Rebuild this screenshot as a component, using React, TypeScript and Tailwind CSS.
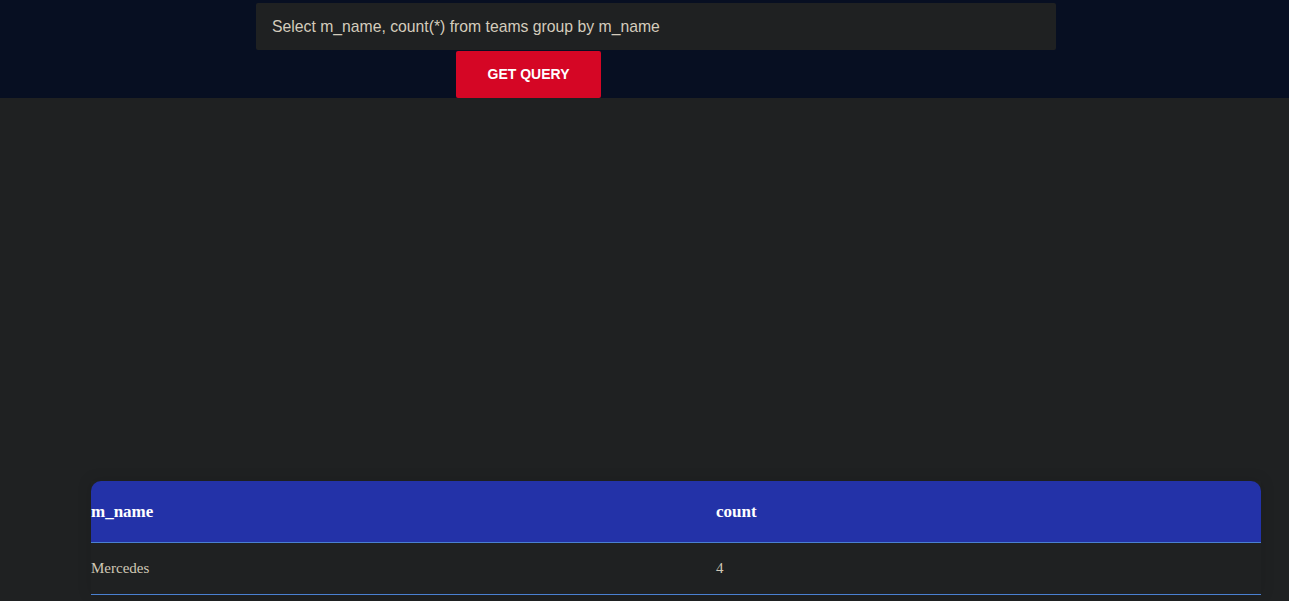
import React from 'react';

const rows = [{ m_name: 'Mercedes', count: 4 }];

export default function App() {
  return (
    <div className="min-h-[601px] bg-[#1f2122]" style={{ fontFamily: '"Liberation Sans", Arial, sans-serif' }}>
      <div className="bg-[#070f22] h-[98px] pt-[3px]">
        <div className="ml-[256px] w-[800px] h-[47px] bg-[#1f2122] rounded-[2px] flex items-center pl-4 text-[15.75px] text-[#d4ccbc]">
          Select m_name, count(*) from teams group by m_name
        </div>
        <button className="ml-[456px] mt-[1px] w-[145px] h-[47px] bg-[#d50625] rounded-[2px] text-white text-[14px] font-bold flex items-center justify-center">
          GET QUERY
        </button>
      </div>

      <div className="pt-[383px] pl-[91px]">
        <div
          className="w-[1170px] shadow-[0_0_14px_rgba(0,0,0,0.12)]"
          style={{ fontFamily: '"Liberation Serif", "Times New Roman", serif' }}
        >
          <div className="grid grid-cols-[625px_1fr] items-center h-[62px] bg-[#2332a8] rounded-t-[10px] border-b border-[#4a80d0] text-[17px] font-bold text-white">
            <div>m_name</div>
            <div>count</div>
          </div>
          {rows.map(r => (
            <div key={r.m_name} className="grid grid-cols-[625px_1fr] items-center h-[52px] border-b border-[#4a80d0] text-[15px] text-[#d0c8b6]">
              <div>{r.m_name}</div>
              <div>{r.count}</div>
            </div>
          ))}
        </div>
      </div>
    </div>
  );
}
